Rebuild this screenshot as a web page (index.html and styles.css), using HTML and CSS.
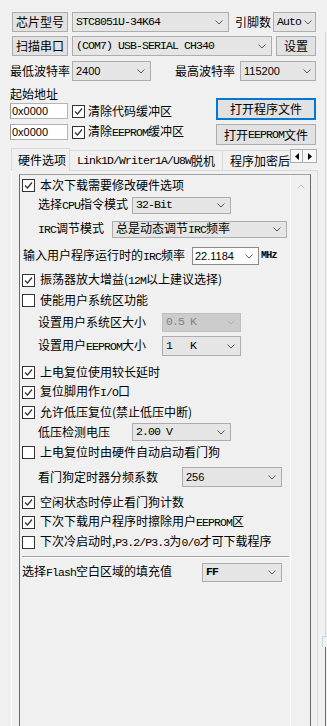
FILE: index.html
```html
<!DOCTYPE html>
<html lang="zh">
<head>
<meta charset="utf-8">
<title>STC-ISP</title>
<link rel="stylesheet" href="styles.css">
</head>
<body>
<div class="app">
  <div class="main">
    <div class="row r1">
      <button class="btn b-chip">芯片型号</button>
      <div class="combo c-chip"><span class="mono">STC8051U-34K64</span><svg class="chev" viewBox="0 0 8 5" width="8" height="5"><path d="M0.5 0.5 L4 4 L7.5 0.5"/></svg></div>
      <span class="lbl pins">引脚数</span>
      <div class="combo c-auto"><span class="mono">Auto</span><svg class="chev" viewBox="0 0 8 5" width="8" height="5"><path d="M0.5 0.5 L4 4 L7.5 0.5"/></svg></div>
    </div>
    <div class="row r2">
      <button class="btn b-chip">扫描串口</button>
      <div class="combo c-com"><span class="mono">(COM7) USB-SERIAL CH340</span><svg class="chev" viewBox="0 0 8 5" width="8" height="5"><path d="M0.5 0.5 L4 4 L7.5 0.5"/></svg></div>
      <button class="btn b-set">设置</button>
    </div>
    <div class="row r3">
      <span class="lbl l-min">最低波特率</span>
      <div class="combo c-min"><span class="num">2400</span><svg class="chev" viewBox="0 0 8 5" width="8" height="5"><path d="M0.5 0.5 L4 4 L7.5 0.5"/></svg></div>
      <span class="lbl l-max">最高波特率</span>
      <div class="combo c-max"><span class="num">115200</span><svg class="chev" viewBox="0 0 8 5" width="8" height="5"><path d="M0.5 0.5 L4 4 L7.5 0.5"/></svg></div>
    </div>

    <div class="addr">
      <div class="addr-left">
        <div class="addr-title">起始地址</div>
        <div class="irow">
          <div class="input"><span class="num">0x0000</span></div>
          <span class="cb cb-top"><svg viewBox="0 0 11 11" width="11" height="11"><path d="M2 5.5 L4.5 8 L9 2.5"/></svg></span>
          <span class="lbl clr">清除代码缓冲区</span>
        </div>
        <div class="irow irow2">
          <div class="input"><span class="num">0x0000</span></div>
          <span class="cb cb-top"><svg viewBox="0 0 11 11" width="11" height="11"><path d="M2 5.5 L4.5 8 L9 2.5"/></svg></span>
          <span class="lbl clr">清除<span class="en">EEPROM</span>缓冲区</span>
        </div>
      </div>
      <div class="addr-right">
        <button class="btn b-open focus">打开程序文件</button>
        <button class="btn b-open2">打开<span class="en">EEPROM</span>文件</button>
      </div>
    </div>

    <div class="tabs">
      <div class="tablist">
        <div class="tab sel">硬件选项</div>
        <div class="tab"><span class="en">Link1D/Writer1A/U8W</span>脱机</div>
        <div class="tab clip">程序加密后</div>
      </div>
      <div class="tabarrows">
        <span class="tarrow"><svg viewBox="0 0 4 7" width="4" height="7"><path d="M4 0 L0 3.5 L4 7 Z"/></svg></span>
        <span class="tarrow"><svg viewBox="0 0 4 7" width="4" height="7"><path d="M0 0 L4 3.5 L0 7 Z"/></svg></span>
      </div>
    </div>

    <div class="panel">
      <div class="scrollbox">
        <div class="content">
          <div class="srow">
            <span class="cb"><svg viewBox="0 0 11 11" width="11" height="11"><path d="M2 5.5 L4.5 8 L9 2.5"/></svg></span>
            <span class="ctext">本次下载需要修改硬件选项</span>
          </div>
          <div class="srow">
            <span class="slbl w112">选择<span class="en">CPU</span>指令模式</span>
            <div class="combo sc h17 w99"><span class="mono">32-Bit</span><svg class="chev" viewBox="0 0 8 5" width="8" height="5"><path d="M0.5 0.5 L4 4 L7.5 0.5"/></svg></div>
          </div>
          <div class="srow mt4">
            <span class="slbl w92"><span class="en">IRC</span>调节模式</span>
            <div class="combo sc h17 w175"><span>总是动态调节<span class="en">IRC</span>频率</span><svg class="chev" viewBox="0 0 8 5" width="8" height="5"><path d="M0.5 0.5 L4 4 L7.5 0.5"/></svg></div>
          </div>
          <div class="srow mt7">
            <span class="slbl p5 w172">输入用户程序运行时的<span class="en">IRC</span>频率</span>
            <div class="combo edit h18 w67"><span class="num">22.1184</span><svg class="chev" viewBox="0 0 8 5" width="8" height="5"><path d="M0.5 0.5 L4 4 L7.5 0.5"/></svg></div>
            <span class="en mhz">MHz</span>
          </div>
          <div class="srow mt4">
            <span class="cb"><svg viewBox="0 0 11 11" width="11" height="11"><path d="M2 5.5 L4.5 8 L9 2.5"/></svg></span>
            <span class="ctext">振荡器放大增益(<span class="en">12M</span>以上建议选择)</span>
          </div>
          <div class="srow">
            <span class="cb"></span>
            <span class="ctext">使能用户系统区功能</span>
          </div>
          <div class="srow mt2">
            <span class="slbl w142">设置用户系统区大小</span>
            <div class="combo dis h19 w79"><span class="mono">0.5 K</span><svg class="chev" viewBox="0 0 8 5" width="8" height="5"><path d="M0.5 0.5 L4 4 L7.5 0.5"/></svg></div>
          </div>
          <div class="srow mt4">
            <span class="slbl w142">设置用户<span class="en">EEPROM</span>大小</span>
            <div class="combo sc h20 w79"><span class="mono pre">1   K</span><svg class="chev" viewBox="0 0 8 5" width="8" height="5"><path d="M0.5 0.5 L4 4 L7.5 0.5"/></svg></div>
          </div>
          <div class="srow mt6">
            <span class="cb"><svg viewBox="0 0 11 11" width="11" height="11"><path d="M2 5.5 L4.5 8 L9 2.5"/></svg></span>
            <span class="ctext">上电复位使用较长延时</span>
          </div>
          <div class="srow">
            <span class="cb"><svg viewBox="0 0 11 11" width="11" height="11"><path d="M2 5.5 L4.5 8 L9 2.5"/></svg></span>
            <span class="ctext">复位脚用作<span class="en">I/O</span>口</span>
          </div>
          <div class="srow">
            <span class="cb"><svg viewBox="0 0 11 11" width="11" height="11"><path d="M2 5.5 L4.5 8 L9 2.5"/></svg></span>
            <span class="ctext">允许低压复位(禁止低压中断)</span>
          </div>
          <div class="srow">
            <span class="slbl w112">低压检测电压</span>
            <div class="combo sc h18 w99"><span class="mono">2.00 V</span><svg class="chev" viewBox="0 0 8 5" width="8" height="5"><path d="M0.5 0.5 L4 4 L7.5 0.5"/></svg></div>
          </div>
          <div class="srow">
            <span class="cb"></span>
            <span class="ctext">上电复位时由硬件自动启动看门狗</span>
          </div>
          <div class="srow mt5">
            <span class="slbl w162">看门狗定时器分频系数</span>
            <div class="combo sc h20 w100"><span class="num">256</span><svg class="chev" viewBox="0 0 8 5" width="8" height="5"><path d="M0.5 0.5 L4 4 L7.5 0.5"/></svg></div>
          </div>
          <div class="srow mt5">
            <span class="cb"><svg viewBox="0 0 11 11" width="11" height="11"><path d="M2 5.5 L4.5 8 L9 2.5"/></svg></span>
            <span class="ctext">空闲状态时停止看门狗计数</span>
          </div>
          <div class="srow">
            <span class="cb"><svg viewBox="0 0 11 11" width="11" height="11"><path d="M2 5.5 L4.5 8 L9 2.5"/></svg></span>
            <span class="ctext">下次下载用户程序时擦除用户<span class="en">EEPROM</span>区</span>
          </div>
          <div class="srow">
            <span class="cb"></span>
            <span class="ctext">下次冷启动时,<span class="en">P3.2/P3.3</span>为<span class="en">0/0</span>才可下载程序</span>
          </div>
          <div class="sep"></div>
          <div class="srow mt4">
            <span class="slbl p2 w182">选择<span class="en">Flash</span>空白区域的填充值</span>
            <div class="combo sc h19 w80"><span class="mono bold">FF</span><svg class="chev" viewBox="0 0 8 5" width="8" height="5"><path d="M0.5 0.5 L4 4 L7.5 0.5"/></svg></div>
          </div>
        </div>
        <div class="vscroll">
          <svg class="up" viewBox="0 0 8 5" width="8" height="5"><path d="M0.5 4.5 L4 1 L7.5 4.5"/></svg>
        </div>
      </div>
    </div>
  </div>
  <div class="side">
    <div class="side-line"></div>
    <div class="side-mark"></div>
    <div class="side-line dark"></div>
  </div>
</div>
</body>
</html>
```

FILE: styles.css
```css
* { box-sizing: border-box; }
html, body { margin: 0; padding: 0; height: 726px; overflow: hidden; }
body {
  background: #f0f0f0;
  color: #000;
  font-family: "Noto Sans CJK SC", "Noto Sans", sans-serif;
  font-size: 12px;
  line-height: 14px;
}
.app { display: flex; height: 726px; }
.main { width: 318px; height: 726px; flex: none; display: flex; flex-direction: column; padding-top: 12px; }

.en { font-family: "Liberation Mono", monospace; font-size: 11.5px; letter-spacing: -0.9px; }
.mono { font-family: "Liberation Mono", monospace; font-size: 11.5px; letter-spacing: -0.9px; }
.num { font-family: "Liberation Sans", Arial, sans-serif; font-size: 11px; }
.pre { white-space: pre; }
.bold { font-weight: bold; }

.row { display: flex; align-items: center; height: 20px; flex: none; }
.r1 { padding-left: 12px; }
.r2 { padding-left: 12px; margin-top: 4px; }
.r3 { padding-left: 10px; margin-top: 5px; }
.lbl { white-space: nowrap; flex: none; }

.btn {
  font: inherit;
  color: #000;
  padding: 0;
  margin: 0;
  background: #e1e1e1;
  border: 1px solid #adadad;
  display: flex;
  align-items: center;
  justify-content: center;
  flex: none;
  white-space: nowrap;
}
.b-chip { width: 56px; height: 20px; }
.b-set { width: 40px; height: 20px; margin-left: 4px; }

.combo {
  display: flex;
  align-items: center;
  justify-content: space-between;
  background: #e5e5e5;
  border: 1px solid #adadad;
  padding: 0 5px 0 3px;
  height: 20px;
  flex: none;
  white-space: nowrap;
  overflow: hidden;
}
.chev { flex: none; }
.chev path { fill: none; stroke: #5a5a5a; stroke-width: 1; }
.c-chip { width: 157px; margin-left: 4px; }
.pins { margin-left: 6px; width: 38px; }
.c-auto { width: 43px; padding-right: 3px; }
.c-com { width: 200px; margin-left: 4px; }
.l-min { width: 62px; }
.c-min { width: 79px; }
.l-max { margin-left: 24px; width: 65px; }
.c-max { width: 76px; padding-right: 4px; }

.addr { display: flex; width: 316px; margin-top: 5px; flex: none; }
.addr-left { padding-left: 10px; display: flex; flex-direction: column; }
.addr-title { height: 16px; line-height: 16px; }
.irow { display: flex; align-items: center; height: 16px; margin-top: 1px; }
.irow2 { margin-top: 5px; }
.input {
  width: 58px;
  height: 16px;
  background: #fff;
  border: 1px solid #b4b4b4;
  border-left-color: #9a9a9a;
  display: flex;
  align-items: center;
  padding-left: 1px;
}
.cb-top { margin-left: 4px; }
.clr { margin-left: 3px; }
.addr-right { margin-left: auto; display: flex; flex-direction: column; }
.b-open { width: 100px; height: 22px; margin-top: 12px; }
.b-open.focus { border: 2px solid #0078d7; background: #e1e1e1; }
.b-open2 { width: 100px; height: 21px; margin-top: 4px; }

.cb {
  width: 13px;
  height: 13px;
  border: 1px solid #333;
  background: #fff;
  display: flex;
  align-items: center;
  justify-content: center;
  flex: none;
}
.cb path { fill: none; stroke: #333; stroke-width: 1.3; }

.tabs { display: flex; margin-top: 3px; padding-left: 11px; height: 22px; flex: none; position: relative; z-index: 1; }
.tablist { display: flex; align-items: flex-end; width: 279px; }
.tab {
  height: 20px;
  border: 1px solid #d9d9d9;
  border-bottom: none;
  border-left: none;
  display: flex;
  align-items: center;
  padding: 0 7px;
  white-space: nowrap;
  flex: none;
  background: #f0f0f0;
}
.tab.sel {
  height: 23px;
  margin-bottom: -1px;
  width: 59px;
  padding: 0 0 0 6px;
  border-left: 1px solid #d9d9d9;
  background: #f0f0f0;
}
.tab.clip { width: 68px; overflow: hidden; border-right: none; }
.tabarrows { display: flex; margin-top: 1px; height: 14px; }
.tarrow {
  width: 13px;
  height: 14px;
  border: 1px solid #adadad;
  background: #f7f7f7;
  display: flex;
  align-items: center;
  justify-content: center;
}
.tarrow + .tarrow { width: 14px; border-left: none; }
.tarrow path { fill: #000; }

.panel {
  margin-left: 11px;
  width: 307px;
  flex: 1;
  min-height: 0;
  display: flex;
  flex-direction: column;
  border-top: 1px solid #d9d9d9;
  border-left: 1px solid #ffffff;
  border-right: 1px solid #d9d9d9;
  padding: 3px 0 0 7px;
}
.scrollbox {
  width: 292px;
  flex: 1;
  min-height: 0;
  border: 1px solid #6a6a6a;
  border-top-color: #a0a0a0;
  border-bottom: none;
  display: flex;
  overflow: hidden;
}
.content { width: 270px; flex: none; display: flex; flex-direction: column; }
.vscroll { flex: 1; border-left: 1px solid #fff; display: flex; justify-content: center; align-items: flex-start; padding-top: 9px; }
.up path { fill: none; stroke: #c2c2c2; stroke-width: 1; }

.srow { display: flex; align-items: center; height: 20px; flex: none; padding-left: 2px; }
.ctext { margin-left: 5px; white-space: nowrap; }
.slbl { white-space: nowrap; flex: none; padding-left: 18px; margin-left: -2px; }
.slbl.p5 { padding-left: 3px; }
.slbl.p2 { padding-left: 0; margin-left: 0; }
.w92 { width: 92px; } .w112 { width: 112px; } .w142 { width: 142px; } .w162 { width: 162px; }
.w172 { width: 172px; } .w182 { width: 180px; }
.w99 { width: 99px; } .w175 { width: 175px; } .w67 { width: 67px; } .w79 { width: 79px; }
.w100 { width: 100px; } .w80 { width: 80px; }
.h17 { height: 17px; } .h18 { height: 18px; } .h19 { height: 19px; } .h20 { height: 20px; }
.combo.edit { background: #fff; border-color: #8a8a8a; padding-left: 2px; }
.combo.dis { background: #cccccc; border-color: #bfbfbf; color: #838383; }
.combo.dis .chev path { stroke: #b0b0b0; }
.mhz { margin-left: 2px; font-weight: bold; font-size: 10px; letter-spacing: -0.8px; }
.mt2 { margin-top: 2px; } .mt4 { margin-top: 4px; } .mt5 { margin-top: 5px; }
.mt6 { margin-top: 6px; } .mt7 { margin-top: 7px; }
.sep { height: 2px; margin: 4px 0 0 2px; width: 267px; border-top: 1px solid #a0a0a0; border-bottom: 1px solid #fff; flex: none; }

.side { flex: 1; height: 726px; padding: 32px 0 0 7px; display: flex; flex-direction: column; }
.side-line { height: 604px; border-left: 1px solid #d6d6d6; flex: none; }
.side-mark { height: 11px; margin-left: -3px; border-top: 1px solid #c9d6e4; border-left: 1px solid #c9d6e4; flex: none; }
.side-line.dark { flex: 1; border-left-color: #6e6e6e; height: auto; }
```
